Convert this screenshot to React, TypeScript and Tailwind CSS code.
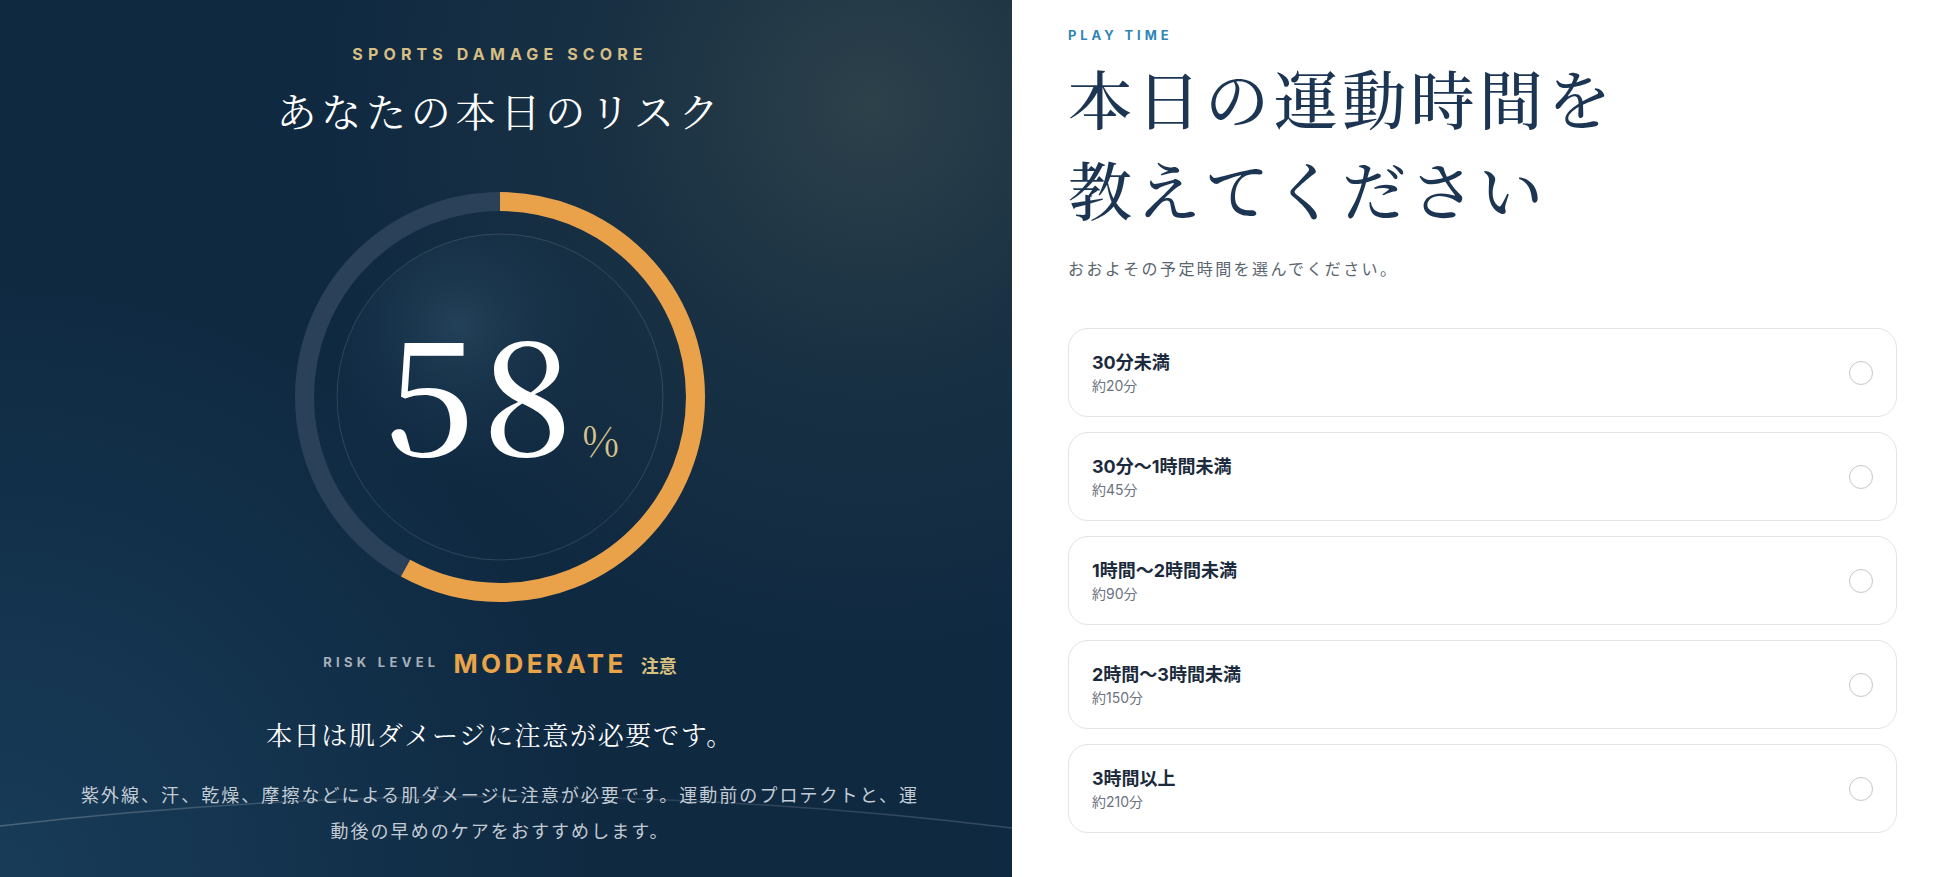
import React from 'react';

const score = 58;

const options = [
  { label: '30分未満', note: '約20分' },
  { label: '30分〜1時間未満', note: '約45分' },
  { label: '1時間〜2時間未満', note: '約90分' },
  { label: '2時間〜3時間未満', note: '約150分' },
  { label: '3時間以上', note: '約210分' },
];

const SERIF_JP = { fontFamily: '"Noto Serif CJK JP", "Noto Sans CJK JP", serif' };

function ScoreRing({ value }: { value: number }) {
  const size = 410;
  const stroke = 19;
  const r = (size - stroke) / 2;
  const c = 2 * Math.PI * r;
  const filled = (value / 100) * c;

  return (
    <div className="relative h-[410px] w-[410px]">
      <svg width={size} height={size} viewBox={`0 0 ${size} ${size}`} className="block">
        <defs>
          <radialGradient id="ring-glow" cx="37%" cy="28%" r="55%">
            <stop offset="0%" stopColor="#2a4a62" stopOpacity="0.7" />
            <stop offset="100%" stopColor="#0f2a42" stopOpacity="0" />
          </radialGradient>
        </defs>
        <circle cx={size / 2} cy={size / 2} r={163} fill="url(#ring-glow)" />
        <circle cx={size / 2} cy={size / 2} r={163} fill="none" stroke="rgba(255,255,255,0.13)" strokeWidth={1} />
        <circle cx={size / 2} cy={size / 2} r={r} fill="none" stroke="#2b4159" strokeWidth={stroke} />
        <circle
          cx={size / 2}
          cy={size / 2}
          r={r}
          fill="none"
          stroke="#e9a24a"
          strokeWidth={stroke}
          strokeDasharray={`${filled} ${c}`}
          transform={`rotate(-90 ${size / 2} ${size / 2})`}
        />
      </svg>
      <div className="absolute inset-0 flex items-center justify-center">
        <div className="flex items-baseline pb-[20px] pl-[4px]">
          <span className="text-[160px] font-medium leading-none tracking-[0.05em] text-white" style={SERIF_JP}>
            {value}
          </span>
          <span className="ml-[2px] text-[40px] leading-none text-[#d8c48a]" style={SERIF_JP}>
            %
          </span>
        </div>
      </div>
    </div>
  );
}

function RiskPanel() {
  return (
    <section className="relative flex w-[1012px] shrink-0 flex-col items-center overflow-hidden bg-[#0f2941] bg-[radial-gradient(circle_at_86%_12%,rgba(56,74,78,0.72)_0%,rgba(40,60,70,0.4)_22%,rgba(15,41,65,0)_48%),radial-gradient(circle_at_0%_100%,rgba(30,72,104,0.6)_0%,rgba(15,41,65,0)_45%)] pr-[12px] pt-[44px]">
      {/* faint horizon arc behind the copy */}
      <svg
        aria-hidden="true"
        className="absolute left-0 top-[760px]"
        width={1012}
        height={90}
        viewBox="0 0 1012 90"
      >
        <defs>
          <linearGradient id="arc-fade" x1="0" x2="1" y1="0" y2="0">
            <stop offset="0%" stopColor="#ffffff" stopOpacity="0.22" />
            <stop offset="50%" stopColor="#ffffff" stopOpacity="0.1" />
            <stop offset="100%" stopColor="#ffffff" stopOpacity="0.16" />
          </linearGradient>
        </defs>
        <path d="M0 66 Q506 6 1012 68" fill="none" stroke="url(#arc-fade)" strokeWidth={1.5} />
      </svg>

      <p className="relative font-['Inter','Liberation_Sans',sans-serif] text-[16px] font-bold leading-[20px] tracking-[0.32em] text-[#d6be84]">
        SPORTS DAMAGE SCORE
      </p>
      <h1 className="relative mt-[22px] text-[40px] font-normal leading-[48px] tracking-[0.12em] text-white" style={SERIF_JP}>
        あなたの本日のリスク
      </h1>

      <div className="relative mt-[58px]">
        <ScoreRing value={score} />
      </div>

      <div className="relative mt-[45px] flex h-[32px] items-center">
        <span className="font-['Inter','Liberation_Sans',sans-serif] text-[13px] font-bold tracking-[0.33em] text-[#a7b0ba]">
          RISK LEVEL
        </span>
        <span className="ml-[14px] font-['Inter','Liberation_Sans',sans-serif] text-[26px] font-bold tracking-[0.13em] text-[#e9a449]">
          MODERATE
        </span>
        <span className="ml-[14px] pt-[4px] font-['Noto_Sans_CJK_JP',sans-serif] text-[18px] font-bold text-[#d8c07f]">
          注意
        </span>
      </div>

      <p className="relative mt-[37px] text-[26px] font-normal leading-[36px] tracking-[0.065em] text-white" style={SERIF_JP}>
        本日は肌ダメージに注意が必要です。
      </p>

      <p className="relative mt-[24px] w-[900px] text-center font-['Noto_Sans_CJK_JP',sans-serif] text-[18px] leading-[36px] tracking-[0.114em] text-[#c3cbd4]">
        紫外線、汗、乾燥、摩擦などによる肌ダメージに注意が必要です。運動前のプロテクトと、運
        <br />
        動後の早めのケアをおすすめします。
      </p>
    </section>
  );
}

function TimeOption({ label, note }: { label: string; note: string }) {
  return (
    <button
      type="button"
      className="flex h-[89px] w-full items-center justify-between rounded-[20px] border border-[#e4e4e4] bg-white pl-[23px] pr-[23px] text-left"
    >
      <div className="flex flex-col pt-[2px]">
        <span className="font-['Inter','Noto_Sans_CJK_JP',sans-serif] text-[18px] font-bold leading-[24px] text-[#1b2b3d]">
          {label}
        </span>
        <span className="mt-[1px] font-['Inter','Noto_Sans_CJK_JP',sans-serif] text-[14px] leading-[20px] text-[#6b7280]">
          {note}
        </span>
      </div>
      <span className="h-[24px] w-[24px] rounded-full border-[1.5px] border-[#c6c6c6]" />
    </button>
  );
}

function PlayTimePanel() {
  return (
    <section className="flex flex-1 flex-col bg-white pl-[56px] pr-[53px] pt-[27px]">
      <p className="font-['Inter','Liberation_Sans',sans-serif] text-[13px] font-bold leading-[16px] tracking-[0.3em] text-[#2f86b8]">
        PLAY TIME
      </p>
      <h2 className="mt-[8px] text-[64px] font-medium leading-[91px] tracking-[0.07em] text-[#1c3552]" style={SERIF_JP}>
        本日の運動時間を
        <br />
        教えてください
      </h2>
      <p className="mt-[23px] font-['Noto_Sans_CJK_JP',sans-serif] text-[16px] leading-[24px] tracking-[0.15em] text-[#5b6570]">
        おおよその予定時間を選んでください。
      </p>
      <div className="mt-[48px] flex flex-col gap-[15px]">
        {options.map(o => (
          <TimeOption key={o.label} label={o.label} note={o.note} />
        ))}
      </div>
    </section>
  );
}

export default function App() {
  return (
    <main className="flex h-[877px] w-full overflow-hidden">
      <RiskPanel />
      <PlayTimePanel />
    </main>
  );
}
